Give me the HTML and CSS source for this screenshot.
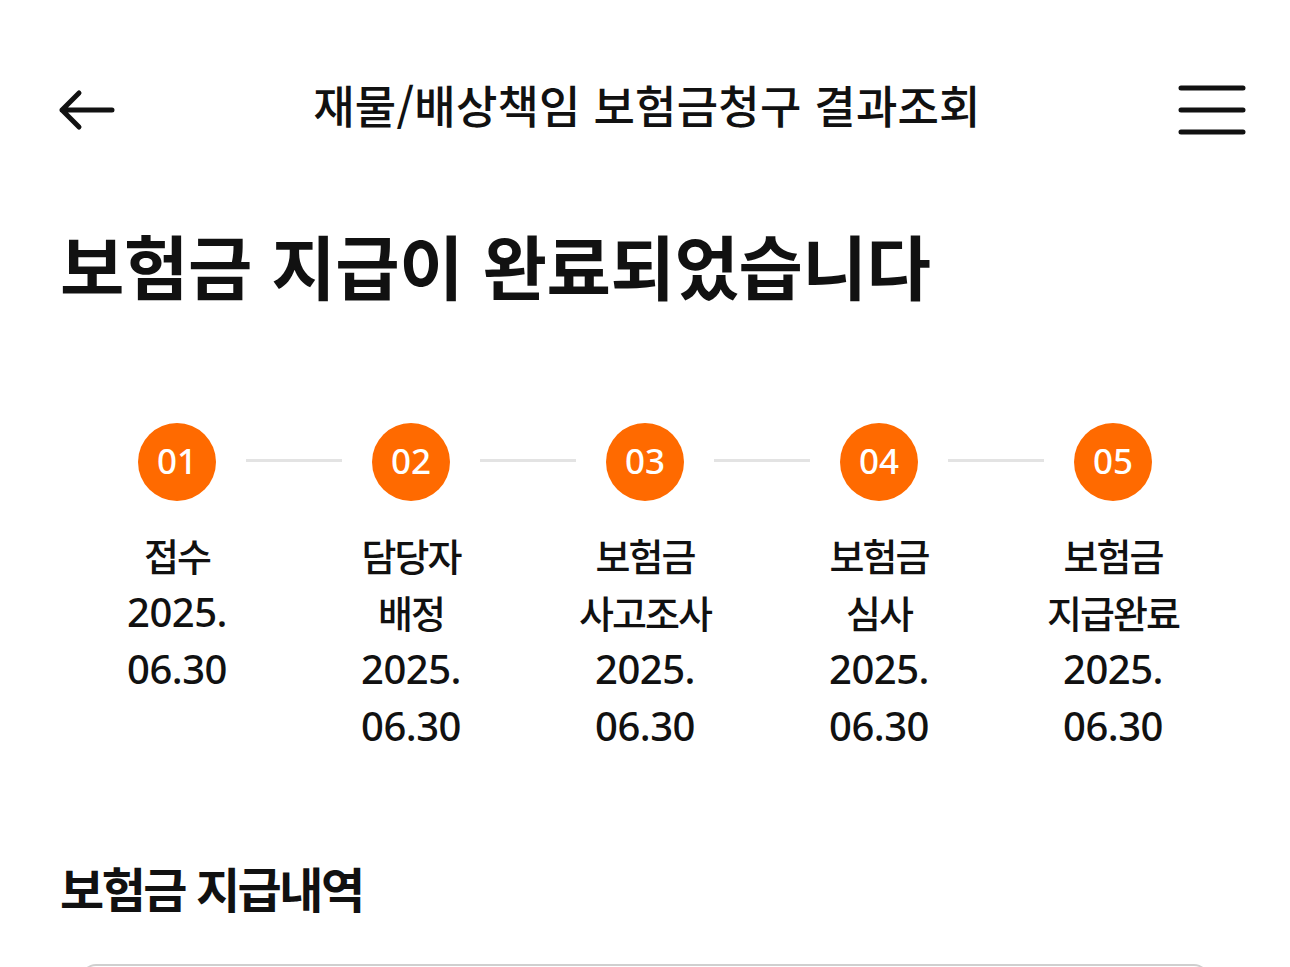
FILE: index.html
```html
<!DOCTYPE html>
<html lang="ko">
<head>
<meta charset="utf-8">
<title>재물/배상책임 보험금청구 결과조회</title>
<link rel="stylesheet" href="styles.css">
</head>
<body>
<header class="topbar">
  <button class="icon-btn back" aria-label="뒤로">
    <svg width="58" height="42" viewBox="0 0 58 42" fill="none" stroke="#111" stroke-width="5" stroke-linecap="round" stroke-linejoin="round">
      <path d="M54 21H4M21 4L4 21L21 38"/>
    </svg>
  </button>
  <h1 class="page-title">재물/배상책임 보험금청구 결과조회</h1>
  <button class="icon-btn menu" aria-label="메뉴">
    <svg width="68" height="52" viewBox="0 0 68 52" fill="none" stroke="#111" stroke-width="5" stroke-linecap="round">
      <path d="M3 4H65M3 26H65M3 48H65"/>
    </svg>
  </button>
</header>

<main class="content">
  <h2 class="headline">보험금 지급이 완료되었습니다</h2>

  <ol class="steps">
    <li class="step">
      <span class="badge">01</span>
      <div class="label"><span class="name">접수</span><span class="date">2025.<br>06.30</span></div>
    </li>
    <li class="step">
      <span class="badge">02</span>
      <div class="label"><span class="name">담당자<br>배정</span><span class="date">2025.<br>06.30</span></div>
    </li>
    <li class="step">
      <span class="badge">03</span>
      <div class="label"><span class="name">보험금<br>사고조사</span><span class="date">2025.<br>06.30</span></div>
    </li>
    <li class="step">
      <span class="badge">04</span>
      <div class="label"><span class="name">보험금<br>심사</span><span class="date">2025.<br>06.30</span></div>
    </li>
    <li class="step">
      <span class="badge">05</span>
      <div class="label"><span class="name">보험금<br>지급완료</span><span class="date">2025.<br>06.30</span></div>
    </li>
  </ol>

  <h3 class="section-title">보험금 지급내역</h3>
  <div class="card"></div>
</main>
</body>
</html>
```

FILE: styles.css
```css
* { box-sizing: border-box; }
html, body { margin: 0; padding: 0; background: #fff; }
body {
  font-family: "Noto Sans CJK KR", "Noto Sans", sans-serif;
  color: #111;
  width: 1290px;
  overflow: hidden;
}

.topbar {
  display: flex;
  align-items: center;
  justify-content: space-between;
  height: 100px;
  margin-top: 60px;
  padding: 0 44px 0 58px;
}
.icon-btn {
  background: none;
  border: 0;
  padding: 0;
  display: flex;
  align-items: center;
  cursor: pointer;
}
.page-title {
  margin: 0;
  font-size: 45px;
  font-weight: 500;
  letter-spacing: 0.2px;
  line-height: 1;
  margin-top: -12px;
}

.content {
  padding: 0 60px;
}
.headline {
  margin: 63px 0 0;
  font-size: 70px;
  font-weight: 700;
  letter-spacing: -0.4px;
  line-height: 84px;
}

.steps {
  list-style: none;
  margin: 116px 0 0;
  padding: 0;
  display: grid;
  grid-template-columns: repeat(5, 234px);
}
.step {
  position: relative;
  display: flex;
  flex-direction: column;
  align-items: center;
}
.step:not(:last-child)::after {
  content: "";
  position: absolute;
  left: calc(50% + 69px);
  top: 36px;
  width: 96px;
  height: 3px;
  background: #e3e3e3;
}
.badge {
  width: 78px;
  height: 78px;
  border-radius: 50%;
  background: #ff6a00;
  color: #fff;
  display: flex;
  align-items: center;
  justify-content: center;
  font-family: "Noto Sans", "Open Sans", sans-serif;
  font-size: 35px;
  font-weight: 500;
  line-height: 1;
  padding-bottom: 3px;
}
.label {
  margin-top: 25px;
  display: flex;
  flex-direction: column;
  align-items: center;
  text-align: center;
  line-height: 57px;
}
.name {
  font-size: 38px;
  font-weight: 500;
  letter-spacing: -2px;
}
.date {
  font-family: "Noto Sans", "Open Sans", sans-serif;
  font-size: 40px;
  font-weight: 500;
  letter-spacing: -0.5px;
}

.section-title {
  margin: 103px 0 0;
  font-size: 48px;
  font-weight: 700;
  letter-spacing: -2.5px;
  line-height: 60px;
}
.card {
  margin: 47px 22px 0;
  height: 200px;
  border-top: 2px solid #cfcfcf;
  border-radius: 14px 14px 0 0;
}
```
